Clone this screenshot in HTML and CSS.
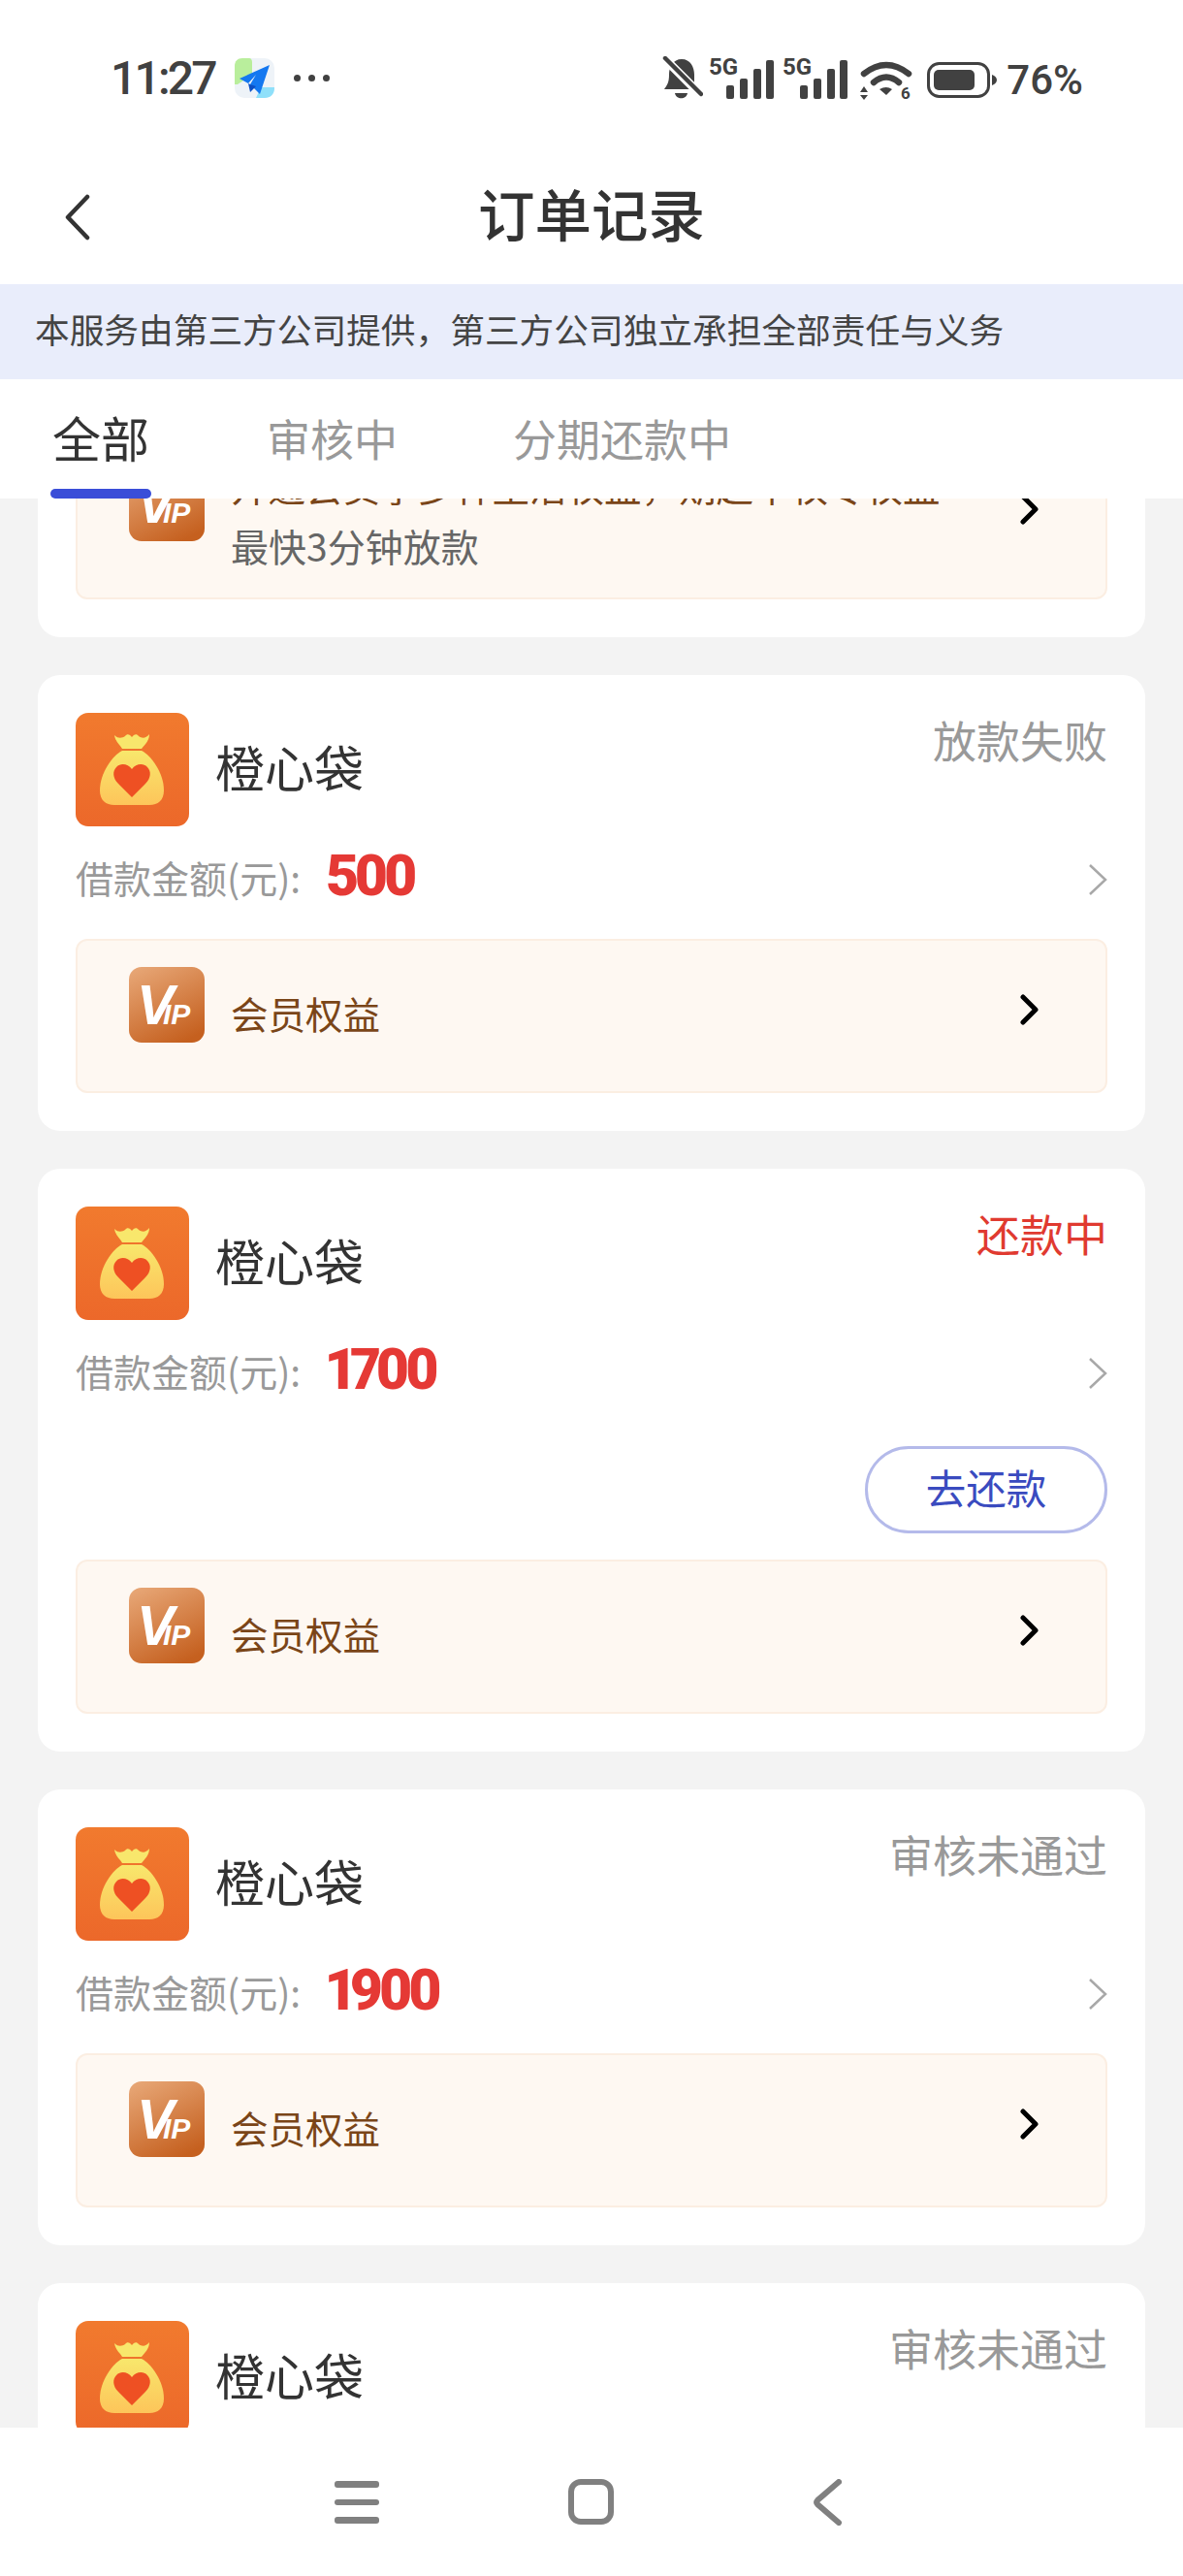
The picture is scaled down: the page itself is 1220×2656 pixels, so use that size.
FILE: index.html
```html
<!DOCTYPE html>
<html lang="zh-CN">
<head>
<meta charset="utf-8">
<title>订单记录</title>
<link rel="stylesheet" href="styles.css">
</head>
<body>
<svg class="sprite" aria-hidden="true">
  <defs>
    <linearGradient id="bagBg" x1="0" y1="0" x2="0" y2="1"><stop offset="0" stop-color="#f17a2e"/><stop offset="1" stop-color="#ec682a"/></linearGradient>
    <linearGradient id="bagBody" x1="0" y1="0" x2="0" y2="1"><stop offset="0" stop-color="#f8e76c"/><stop offset="1" stop-color="#fdc55a"/></linearGradient>
    <linearGradient id="vipBg" x1="0.2" y1="0" x2="0.7" y2="1"><stop offset="0" stop-color="#e6a473"/><stop offset="1" stop-color="#c5601f"/></linearGradient>
    <symbol id="bag" viewBox="0 0 117 117">
      <rect width="117" height="117" rx="13" fill="url(#bagBg)"/>
      <path d="M40 23C44 27 48 26 51 24C53 21 56 22 58 25C60 22 63 21 65 24C68 26 72 27 76 22C76 29 71 33 68 37H48C46 33 41 30 40 23Z" fill="#f8e76c"/>
      <path d="M48 39H68C78 44 91 62 91 80C91 90 85 95 76 95H40C31 95 25 90 25 80C25 62 38 44 48 39Z" fill="url(#bagBody)"/>
      <path d="M58 87L44 73C38 67 38 60 42 56C47 51 54 53 58 58C62 53 69 51 74 56C78 60 78 67 72 73Z" fill="#ee5023"/>
    </symbol>
    <symbol id="vip" viewBox="0 0 78 78">
      <rect width="78" height="78" rx="13" fill="url(#vipBg)"/>
      <text x="8" y="59" class="vip-v">V</text>
      <text x="35" y="59" class="vip-ip">IP</text>
    </symbol>
    <symbol id="signal" viewBox="0 0 66 44">
      <text x="-1" y="17" class="sig-5g">5G</text>
      <rect x="17" y="28" width="8" height="14" rx="2"/>
      <rect x="31" y="21" width="8" height="21" rx="2"/>
      <rect x="45" y="11" width="8" height="31" rx="2"/>
      <rect x="58" y="2" width="8" height="40" rx="2"/>
    </symbol>
  </defs>
</svg>

<div class="phone">
  <div class="status">
    <div class="status-left">
      <span class="clock">11:27</span>
      <svg class="plane" viewBox="0 0 41 41" width="41" height="41">
        <rect width="41" height="41" rx="10" fill="#eef3f8"/>
        <path d="M0 8C0 3 3 0 8 0H15C17 0 18 2 18 4V17L3 27H0Z" fill="#b9ee9c"/>
        <path d="M22 41L27 30H41V31C41 37 37 41 31 41Z" fill="#8fe0fa"/>
        <path d="M36 7L5 21L14 26L22 17L16 27L26 37Z" fill="#1478f0"/>
        <path d="M14 26L16 35L22 29L16 27Z" fill="#0b4fc4"/>
      </svg>
      <span class="dots"><i></i><i></i><i></i></span>
    </div>
    <div class="status-right">
      <svg class="bell" viewBox="0 0 42 45" width="42" height="45">
        <path d="M20 3C29 3 33 11 33 19V27L36 34H2C5 30 7 27 7 19C7 11 11 3 20 3Z" fill="#414141"/>
        <path d="M13 38H26C25 45 14 45 13 38Z" fill="#414141"/>
        <path d="M2 2L40 40" stroke="#fff" stroke-width="9"/>
        <path d="M3 2L40 39" stroke="#414141" stroke-width="4.5" stroke-linecap="round"/>
      </svg>
      <svg class="signal" width="66" height="44"><use href="#signal"/></svg>
      <svg class="signal" width="66" height="44"><use href="#signal"/></svg>
      <svg class="wifi" viewBox="0 0 54 40" width="54" height="40">
        <path d="M4 13Q27 -5 50 13" fill="none" stroke="#414141" stroke-width="6.5" stroke-linecap="round"/>
        <path d="M14 22Q27 11 40 22" fill="none" stroke="#414141" stroke-width="6.5" stroke-linecap="round"/>
        <path d="M20 29Q27 25 33 29L27 35Z" fill="#414141"/>
        <path d="M0 32L4 26L8 32ZM0 35L4 40L8 35Z" fill="#414141"/>
        <text x="42" y="39" class="wifi-6">6</text>
      </svg>
      <svg class="battery" viewBox="0 0 72 37" width="72" height="37">
        <rect x="1.5" y="1.5" width="62" height="34" rx="11" fill="none" stroke="#414141" stroke-width="3"/>
        <rect x="7" y="8" width="42" height="21" rx="5" fill="#414141"/>
        <path d="M67 13C70 14 72 16 72 18.500C72 21 70 23 67 24Z" fill="#414141"/>
      </svg>
      <span class="percent">76%</span>
    </div>
  </div>

  <header class="topbar">
    <svg class="back" viewBox="0 0 26 48" width="26" height="48"><path d="M23 3L3 24L23 45" fill="none" stroke="#333" stroke-width="4.500" stroke-linecap="round" stroke-linejoin="round"/></svg>
    <h1 class="title">订单记录</h1>
  </header>

  <div class="notice">本服务由第三方公司提供，第三方公司独立承担全部责任与义务</div>

  <nav class="tabs">
    <span class="tab tab-active">全部</span>
    <span class="tab">审核中</span>
    <span class="tab">分期还款中</span>
  </nav>

  <main class="list">
    <section class="card card-scrolled">
      <div class="vipbox vipbox-tall">
        <svg class="vipicon"><use href="#vip"/></svg>
        <div class="vipcopy vipcopy-tall">
          <div class="viptext">开通会员享多种生活权益，期超中权专权益</div>
          <div class="vipsub">最快3分钟放款</div>
        </div>
        <svg class="go go-tall" viewBox="0 0 20 32"><path d="M3 3L16 16L3 29" fill="none" stroke="#000" stroke-width="5" stroke-linecap="round" stroke-linejoin="round"/></svg>
      </div>
    </section>

    <section class="card">
      <div class="head">
        <svg class="bag"><use href="#bag"/></svg>
        <span class="name">橙心袋</span>
        <span class="state state-muted">放款失败</span>
      </div>
      <div class="amount-row">
        <span class="label">借款金额(元):</span><span class="amount">500</span>
        <svg class="more" viewBox="0 0 20 34"><path d="M2 2L18 17L2 32" fill="none" stroke="#a8a8a8" stroke-width="2.500"/></svg>
      </div>
      <div class="vipbox">
        <svg class="vipicon"><use href="#vip"/></svg>
        <div class="vipcopy"><div class="viptext">会员权益</div></div>
        <svg class="go" viewBox="0 0 20 32"><path d="M3 3L16 16L3 29" fill="none" stroke="#000" stroke-width="5" stroke-linecap="round" stroke-linejoin="round"/></svg>
      </div>
    </section>

    <section class="card">
      <div class="head">
        <svg class="bag"><use href="#bag"/></svg>
        <span class="name">橙心袋</span>
        <span class="state state-red">还款中</span>
      </div>
      <div class="amount-row">
        <span class="label">借款金额(元):</span><span class="amount">1700</span>
        <svg class="more" viewBox="0 0 20 34"><path d="M2 2L18 17L2 32" fill="none" stroke="#a8a8a8" stroke-width="2.500"/></svg>
      </div>
      <div class="actions"><span class="repay">去还款</span></div>
      <div class="vipbox vipbox-after">
        <svg class="vipicon"><use href="#vip"/></svg>
        <div class="vipcopy"><div class="viptext">会员权益</div></div>
        <svg class="go" viewBox="0 0 20 32"><path d="M3 3L16 16L3 29" fill="none" stroke="#000" stroke-width="5" stroke-linecap="round" stroke-linejoin="round"/></svg>
      </div>
    </section>

    <section class="card">
      <div class="head">
        <svg class="bag"><use href="#bag"/></svg>
        <span class="name">橙心袋</span>
        <span class="state state-muted">审核未通过</span>
      </div>
      <div class="amount-row">
        <span class="label">借款金额(元):</span><span class="amount">1900</span>
        <svg class="more" viewBox="0 0 20 34"><path d="M2 2L18 17L2 32" fill="none" stroke="#a8a8a8" stroke-width="2.500"/></svg>
      </div>
      <div class="vipbox">
        <svg class="vipicon"><use href="#vip"/></svg>
        <div class="vipcopy"><div class="viptext">会员权益</div></div>
        <svg class="go" viewBox="0 0 20 32"><path d="M3 3L16 16L3 29" fill="none" stroke="#000" stroke-width="5" stroke-linecap="round" stroke-linejoin="round"/></svg>
      </div>
    </section>

    <section class="card">
      <div class="head">
        <svg class="bag"><use href="#bag"/></svg>
        <span class="name">橙心袋</span>
        <span class="state state-muted">审核未通过</span>
      </div>
    </section>
  </main>

  <footer class="navbar">
    <span class="nav-menu"><i></i><i></i><i></i></span>
    <span class="nav-home"></span>
    <svg class="nav-back" viewBox="0 0 30 48" width="30" height="48"><path d="M27 3L5 22Q3 24 5 26L27 45" fill="none" stroke="#808080" stroke-width="6" stroke-linecap="round"/></svg>
  </footer>
</div>
</body>
</html>
```

FILE: styles.css
```css
* { box-sizing: border-box; }
html, body { margin: 0; padding: 0; }
body {
  width: 1220px;
  height: 2656px;
  overflow: hidden;
  background: #f3f3f3;
  font-family: "Noto Sans CJK SC", "Noto Sans", sans-serif;
  color: #333;
}
.sprite { position: absolute; width: 0; height: 0; }
.phone { display: flex; flex-direction: column; width: 1220px; height: 2656px; }

/* status bar */
.status {
  height: 155px;
  background: #fff;
  display: flex;
  justify-content: space-between;
  align-items: flex-start;
  padding: 58px 103px 0 114px;
  flex: none;
}
.status-left { display: flex; align-items: center; height: 45px; }
.clock { font-family: Roboto, sans-serif; font-weight: 500; font-size: 48px; line-height: 50px; letter-spacing: -2.8px; color: #414141; width: 128px; }
.plane { flex: none; }
.dots { display: flex; gap: 8px; margin-left: 20px; }
.dots i { width: 7px; height: 7px; border-radius: 50%; background: #414141; }
.status-right { display: flex; align-items: flex-start; }
.bell { flex: none; }
.signal { flex: none; fill: #414141; margin-top: 2px; margin-left: 7px; overflow: visible; }
.signal + .signal { margin-left: 10px; }
.sig-5g { font-family: Roboto, sans-serif; font-weight: 700; font-size: 24px; fill: #414141; }
.wifi { flex: none; margin: 5px 0 0 13px; overflow: visible; }
.wifi-6 { font-family: Roboto, sans-serif; font-weight: 700; font-size: 17px; fill: #414141; }
.battery { flex: none; margin: 6px 0 0 15px; }
.percent { font-family: Roboto, sans-serif; font-weight: 500; font-size: 42px; line-height: 50px; color: #414141; margin-left: 10px; white-space: nowrap; }

/* header */
.topbar {
  position: relative;
  height: 138px;
  flex: none;
  background: #fff;
  display: flex;
  align-items: center;
  justify-content: center;
}
.back { position: absolute; left: 67px; top: 45px; }
.title { margin: 0; font-size: 58.500px; font-weight: 500; line-height: 128px; height: 138px; color: #333; }

.notice {
  height: 98px;
  flex: none;
  background: #e9edfb;
  padding-left: 36px;
  font-size: 35.700px;
  line-height: 92px;
  color: #444;
  white-space: nowrap;
}

/* tabs */
.tabs {
  position: relative;
  z-index: 2;
  height: 123px;
  flex: none;
  background: #fff;
  display: flex;
  gap: 119px;
  padding-left: 54px;
  font-size: 45px;
  color: #999;
}
.tab { display: block; height: 123px; line-height: 122px; }
.tab-active { position: relative; font-size: 50px; line-height: 118px; margin-right: 2px; color: #333; }
.tab-active::after {
  content: "";
  position: absolute;
  left: -2px;
  right: -2px;
  bottom: 0;
  height: 10px;
  border-radius: 5px;
  background: #3a4ed8;
}

/* list */
.list {
  flex: 1;
  min-height: 0;
  overflow: hidden;
  padding: 0 39px;
  display: flex;
  flex-direction: column;
  gap: 39px;
}
.card { flex: none; background: #fff; border-radius: 23px; padding: 39px; }
.card-scrolled { margin-top: -63px; padding-top: 0; border-radius: 0 0 23px 23px; }
.card-scrolled .vipbox { margin-top: 0; }
.head { display: flex; align-items: flex-start; height: 117px; }
.bag { width: 117px; height: 117px; flex: none; }
.name { font-size: 51px; line-height: 110px; height: 117px; margin-left: 27px; color: #333; }
.state { margin-left: auto; font-size: 45px; line-height: 55px; height: 60px; white-space: nowrap; }
.state-muted { color: #999; }
.state-red { color: #e03a30; }

.amount-row { display: flex; align-items: center; height: 60px; margin-top: 25px; }
.label { font-size: 39px; color: #999; line-height: 54px; height: 60px; white-space: nowrap; width: 258px; }
.amount { font-family: Roboto, sans-serif; font-weight: 900; font-variant-numeric: proportional-nums; font-size: 59px; letter-spacing: -5px; line-height: 60px; color: #e53935; margin-top: -8px; }
.more { width: 20px; height: 34px; margin-left: auto; flex: none; }

.actions { display: flex; justify-content: flex-end; margin-top: 45px; }
.repay {
  width: 250px;
  height: 90px;
  border: 3px solid #b4baea;
  border-radius: 45px;
  text-align: center;
  font-size: 41.500px;
  line-height: 78px;
  color: #3a4bbf;
}

.vipbox {
  display: flex;
  align-items: flex-start;
  height: 159px;
  margin-top: 31px;
  padding: 27px 68px 0 53px;
  background: #fef8f2;
  border: 2px solid #fbeee2;
  border-radius: 12px;
}
.vipbox-after { margin-top: 27px; }
.vipbox-tall { height: 167px; }
.vipicon { width: 78px; height: 78px; flex: none; }
.vipcopy { margin-left: 27px; flex: 1; min-width: 0; margin-top: 27px; }
.vipcopy-tall { margin-top: 0; }
.viptext { font-size: 38.500px; line-height: 40px; color: #7a4518; white-space: nowrap; }
.vipsub { font-size: 39px; line-height: 46px; margin-top: 19px; color: #666; white-space: nowrap; }
.go { width: 20px; height: 32px; flex: none; margin-top: 28px; }
.go-tall { margin-top: 29px; }
.vip-v { font-family: "Liberation Sans", sans-serif; font-style: italic; font-weight: 700; font-size: 58px; fill: #fff; }
.vip-ip { font-family: "Liberation Sans", sans-serif; font-style: italic; font-weight: 700; font-size: 30px; fill: #fff; }

/* navigation */
.navbar {
  position: relative;
  z-index: 2;
  height: 153px;
  flex: none;
  background: #fff;
}
.nav-menu { position: absolute; left: 345px; top: 55px; width: 46px; display: flex; flex-direction: column; gap: 12px; }
.nav-menu i { display: block; height: 6.500px; border-radius: 3px; background: #808080; }
.nav-home { position: absolute; left: 586px; top: 53px; width: 47px; height: 47px; border: 6px solid #808080; border-radius: 13px; }
.nav-back { position: absolute; left: 838px; top: 53px; }
```
